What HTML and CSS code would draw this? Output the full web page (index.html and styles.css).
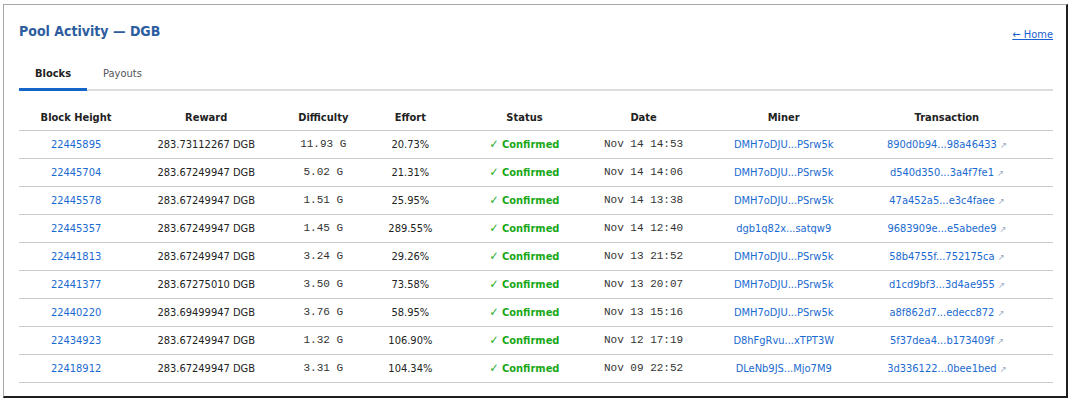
FILE: index.html
```html
<!DOCTYPE html>
<html>
<head>
<meta charset="utf-8">
<link rel="stylesheet" href="styles.css">
</head>
<body>
<div class="card">
  <div class="top">
    <h1 class="title">Pool Activity — DGB</h1>
    <a class="home" href="#">← Home</a>
  </div>
  <div class="tabs">
    <span class="tab active">Blocks</span>
    <span class="tab">Payouts</span>
  </div>
  <table class="blocks">
    <colgroup>
      <col class="c1"><col class="c2"><col class="c3"><col class="c4"><col class="c5"><col class="c6"><col class="c7"><col class="c8">
    </colgroup>
    <thead>
      <tr><th>Block Height</th><th>Reward</th><th>Difficulty</th><th>Effort</th><th>Status</th><th>Date</th><th>Miner</th><th class="tx">Transaction</th></tr>
    </thead>
    <tbody>
      <tr><td><a href="#">22445895</a></td><td>283.73112267 DGB</td><td class="mono">11.93 G</td><td>20.73%</td><td class="ok"><span class="chk">✓</span> Confirmed</td><td class="mono">Nov 14 14:53</td><td><a href="#">DMH7oDJU...PSrw5k</a></td><td class="tx"><a href="#">890d0b94...98a46433</a> <span class="ext">↗</span></td></tr>
      <tr><td><a href="#">22445704</a></td><td>283.67249947 DGB</td><td class="mono">5.02 G</td><td>21.31%</td><td class="ok"><span class="chk">✓</span> Confirmed</td><td class="mono">Nov 14 14:06</td><td><a href="#">DMH7oDJU...PSrw5k</a></td><td class="tx"><a href="#">d540d350...3a4f7fe1</a> <span class="ext">↗</span></td></tr>
      <tr><td><a href="#">22445578</a></td><td>283.67249947 DGB</td><td class="mono">1.51 G</td><td>25.95%</td><td class="ok"><span class="chk">✓</span> Confirmed</td><td class="mono">Nov 14 13:38</td><td><a href="#">DMH7oDJU...PSrw5k</a></td><td class="tx"><a href="#">47a452a5...e3c4faee</a> <span class="ext">↗</span></td></tr>
      <tr><td><a href="#">22445357</a></td><td>283.67249947 DGB</td><td class="mono">1.45 G</td><td>289.55%</td><td class="ok"><span class="chk">✓</span> Confirmed</td><td class="mono">Nov 14 12:40</td><td><a href="#">dgb1q82x...satqw9</a></td><td class="tx"><a href="#">9683909e...e5abede9</a> <span class="ext">↗</span></td></tr>
      <tr><td><a href="#">22441813</a></td><td>283.67249947 DGB</td><td class="mono">3.24 G</td><td>29.26%</td><td class="ok"><span class="chk">✓</span> Confirmed</td><td class="mono">Nov 13 21:52</td><td><a href="#">DMH7oDJU...PSrw5k</a></td><td class="tx"><a href="#">58b4755f...752175ca</a> <span class="ext">↗</span></td></tr>
      <tr><td><a href="#">22441377</a></td><td>283.67275010 DGB</td><td class="mono">3.50 G</td><td>73.58%</td><td class="ok"><span class="chk">✓</span> Confirmed</td><td class="mono">Nov 13 20:07</td><td><a href="#">DMH7oDJU...PSrw5k</a></td><td class="tx"><a href="#">d1cd9bf3...3d4ae955</a> <span class="ext">↗</span></td></tr>
      <tr><td><a href="#">22440220</a></td><td>283.69499947 DGB</td><td class="mono">3.76 G</td><td>58.95%</td><td class="ok"><span class="chk">✓</span> Confirmed</td><td class="mono">Nov 13 15:16</td><td><a href="#">DMH7oDJU...PSrw5k</a></td><td class="tx"><a href="#">a8f862d7...edecc872</a> <span class="ext">↗</span></td></tr>
      <tr><td><a href="#">22434923</a></td><td>283.67249947 DGB</td><td class="mono">1.32 G</td><td>106.90%</td><td class="ok"><span class="chk">✓</span> Confirmed</td><td class="mono">Nov 12 17:19</td><td><a href="#">D8hFgRvu...xTPT3W</a></td><td class="tx"><a href="#">5f37dea4...b173409f</a> <span class="ext">↗</span></td></tr>
      <tr><td><a href="#">22418912</a></td><td>283.67249947 DGB</td><td class="mono">3.31 G</td><td>104.34%</td><td class="ok"><span class="chk">✓</span> Confirmed</td><td class="mono">Nov 09 22:52</td><td><a href="#">DLeNb9JS...Mjo7M9</a></td><td class="tx"><a href="#">3d336122...0bee1bed</a> <span class="ext">↗</span></td></tr>
    </tbody>
  </table>
</div>
</body>
</html>
```
FILE: styles.css
```css
html, body {
  margin: 0;
  padding: 0;
  background: #ffffff;
}
body {
  font-family: Tahoma, "DejaVu Sans Condensed", "Liberation Sans", sans-serif;
  font-size: 11px;
  color: #222;
}
.card {
  margin: 4px 4px 0 3px;
  height: 394px;
  box-sizing: border-box;
  border: 1px solid #a8a8a8;
  border-right: 2px solid #1e1e1e;
  border-bottom: 2px solid #1e1e1e;
  padding: 17px 13px 14px 15px;
  background: #fff;
}
.top {
  display: flex;
  justify-content: space-between;
  align-items: flex-end;
}
.title {
  margin: 0;
  font-size: 14px;
  line-height: 18px;
  font-weight: bold;
  color: #2d5d9f;
}
.home {
  color: #1a5fd0;
  text-decoration: underline;
  font-size: 11px;
  line-height: 13px;
  margin-bottom: -1px;
}
.tabs {
  display: flex;
  margin-top: 19px;
  border-bottom: 2px solid #dddddd;
}
.tab {
  padding: 8px 16px;
  line-height: 13px;
  color: #555;
  border-bottom: 3px solid transparent;
  margin-bottom: -2px;
}
.tab.active {
  color: #222;
  font-weight: bold;
  border-bottom-color: #1565c8;
}
.blocks {
  margin-top: 14px;
  width: 100%;
  border-collapse: collapse;
  table-layout: fixed;
}
.c1 { width: 114px; }
.c2 { width: 146px; }
.c3 { width: 88px; }
.c4 { width: 86px; }
.c5 { width: 142px; }
.c6 { width: 96px; }
.c7 { width: 184px; }
.c8 { width: 177px; }
.blocks th {
  font-weight: bold;
  color: #222;
  text-align: center;
  padding: 6px 0;
  line-height: 13px;
  border-bottom: 1px solid #cccccc;
  white-space: nowrap;
}
.blocks td {
  text-align: center;
  height: 27px;
  padding: 0;
  line-height: 13px;
  border-bottom: 1px solid #cccccc;
  white-space: nowrap;
}
.blocks .tx {
  padding-right: 35px;
}
.blocks a {
  color: #1a6ad0;
  text-decoration: none;
}
.mono {
  font-family: "Courier New", "Nimbus Mono PS", "FreeMono", "Liberation Mono", monospace;
  font-size: 11px;
  color: #333;
}
.ok {
  color: #18a818;
  font-weight: bold;
}
.chk {
  font-size: 12px;
  font-weight: normal;
}
.ext {
  color: #9aaac0;
  font-size: 9px;
}
```
